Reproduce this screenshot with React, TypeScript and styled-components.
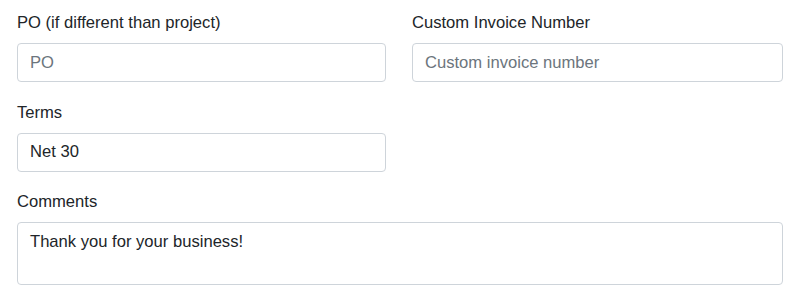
import { FunctionComponent } from "react";
import styled, { createGlobalStyle } from "styled-components";

const GlobalStyle = createGlobalStyle`
  html, body {
    margin: 0;
    padding: 0;
    background: #ffffff;
  }
  body {
    font-family: "Liberation Sans", Arial, sans-serif;
    font-size: 16.6px;
    line-height: 1.5;
    color: #212529;
  }
  * {
    box-sizing: border-box;
  }
`;

type FieldProps = {
  label: string;
  placeholder?: string;
  value?: string;
};

const Field: FunctionComponent<FieldProps> = ({ label, placeholder, value }) => {
  return (
    <Group>
      <Label>{label}</Label>
      <Input placeholder={placeholder} defaultValue={value} />
    </Group>
  );
};

export default function App() {
  return (
    <>
      <GlobalStyle />
      <Form>
        <Row>
          <Field label="PO (if different than project)" placeholder="PO" />
          <Field label="Custom Invoice Number" placeholder="Custom invoice number" />
        </Row>
        <Row>
          <Field label="Terms" value="Net 30" />
          <div />
        </Row>
        <Group>
          <Label>Comments</Label>
          <TextArea rows={2} defaultValue="Thank you for your business!" />
        </Group>
      </Form>
    </>
  );
}

const Form = styled.form`
  display: flex;
  flex-direction: column;
  gap: 18.5px;
  padding: 11px 17px 0 17px;
`;

const Row = styled.div`
  display: grid;
  grid-template-columns: 369px 1fr;
  column-gap: 26px;
`;

const Group = styled.div`
  display: flex;
  flex-direction: column;
`;

const Label = styled.label`
  display: block;
  font-size: 16.6px;
  line-height: 24px;
  margin-bottom: 8px;
  color: #212529;
`;

const controlStyles = `
  display: block;
  width: 100%;
  padding: 6px 12px;
  font-family: "Liberation Sans", Arial, sans-serif;
  font-size: 16.6px;
  line-height: 25px;
  color: #212529;
  background: #ffffff;
  border: 1px solid #ced4da;
  border-radius: 4px;
  outline: none;

  &::placeholder {
    color: #6c757d;
    opacity: 1;
  }
`;

const Input = styled.input`
  ${controlStyles}
  height: 39px;
`;

const TextArea = styled.textarea`
  ${controlStyles}
  height: 63px;
  resize: none;
`;
